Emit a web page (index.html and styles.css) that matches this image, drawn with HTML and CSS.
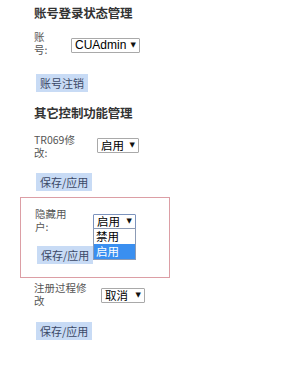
FILE: index.html
```html
<!DOCTYPE html>
<html lang="zh-CN">
<head>
<meta charset="utf-8">
<title>账号登录状态管理</title>
<link rel="stylesheet" href="styles.css">
</head>
<body>
<div class="page">
  <h2 class="title t1">账号登录状态管理</h2>
  <div class="row r1">
    <span class="label l1">账号:</span>
    <span class="sel s1"><span class="val latin">CUAdmin</span><span class="arrow">▼</span></span>
  </div>
  <div class="btn b1">账号注销</div>

  <h2 class="title t2">其它控制功能管理</h2>
  <div class="row r2">
    <span class="label l2">TR069修改:</span>
    <span class="sel s2"><span class="val">启用</span><span class="arrow">▼</span></span>
  </div>
  <div class="btn b2">保存/应用</div>

  <div class="box">
    <div class="row r3">
      <span class="label l3">隐藏用户:</span>
      <span class="sel s3 open"><span class="val">启用</span><span class="arrow">▼</span>
        <span class="list">
          <span class="opt">禁用</span>
          <span class="opt active">启用</span>
        </span>
      </span>
    </div>
    <div class="btn b3">保存/应用</div>
  </div>

  <div class="row r4">
    <span class="label l4">注册过程修改</span>
    <span class="sel s4"><span class="val">取消</span><span class="arrow">▼</span></span>
  </div>
  <div class="btn b4">保存/应用</div>
</div>
</body>
</html>
```

FILE: styles.css
```css
html, body {
  margin: 0;
  padding: 0;
  background: #ffffff;
}
body {
  font-family: "Noto Sans CJK SC", "Liberation Sans", sans-serif;
  color: #333333;
}
.page {
  padding-left: 34px;
  padding-top: 5px;
  display: flex;
  flex-direction: column;
  align-items: flex-start;
}
.title {
  margin: 0;
  font-size: 12.5px;
  line-height: 16px;
  font-weight: bold;
  color: #333333;
  letter-spacing: -0.2px;
}
.t2 { margin-top: 13px; }

.row {
  display: flex;
  align-items: flex-start;
}
.label {
  flex: 0 0 auto;
  font-size: 10.5px;
  line-height: 13px;
  color: #555555;
  word-break: normal;
  line-break: strict;
}
.r1 { margin-top: 9px; }
.r2 { margin-top: 12px; }
.r3 { margin-top: 9px; }
.r4 { margin-top: 3px; }
.l1 { width: 16px; }
.l2 { width: 42px; }
.l3 { width: 34px; }
.l4 { width: 55px; }

.sel {
  position: relative;
  box-sizing: border-box;
  height: 15px;
  border: 1px solid #a9a9a9;
  border-radius: 1px;
  background: #ffffff;
  display: flex;
  align-items: center;
  justify-content: space-between;
  padding: 0 3px 0 3px;
  color: #000000;
  font-size: 11.5px;
  line-height: 13px;
}
.val.latin {
  font-family: "Liberation Sans", sans-serif;
  font-size: 12px;
}
.arrow {
  font-size: 7px;
  line-height: 13px;
  color: #111111;
  font-family: "DejaVu Sans", sans-serif;
}
.s1 { width: 69px; margin-top: 8px; margin-left: 21px; }
.s2 { width: 42px; margin-top: 5px; margin-left: 21px; }
.s3 { width: 43px; margin-top: 7px; margin-left: 24px; border-color: #7c93bd; }
.s4 { width: 44px; margin-top: 7px; margin-left: 12px; }

.list {
  position: absolute;
  left: -1px;
  top: 13px;
  width: 43px;
  box-sizing: border-box;
  border: 1px solid #8c9bb5;
  background: #ffffff;
  display: flex;
  flex-direction: column;
  z-index: 5;
}
.opt {
  height: 15px;
  line-height: 15px;
  padding-left: 2px;
  font-size: 11.5px;
  color: #000000;
}
.opt.active {
  background: #3a8ff0;
  color: #ffffff;
}

.btn {
  margin-left: 2px;
  height: 18px;
  line-height: 18px;
  padding: 0 4px;
  background: #c8dbf5;
  color: #3b4866;
  font-size: 11px;
}
.b1 { margin-top: 18px; }
.b2 { margin-top: 14px; }
.b3 { margin-top: 13px; }
.b4 { margin-top: 15px; }

.box {
  margin-top: 6px;
  margin-left: -14px;
  width: 150px;
  box-sizing: border-box;
  border: 1px solid #dc9ea5;
  padding: 0 0 13px 14px;
  display: flex;
  flex-direction: column;
  align-items: flex-start;
}
```
